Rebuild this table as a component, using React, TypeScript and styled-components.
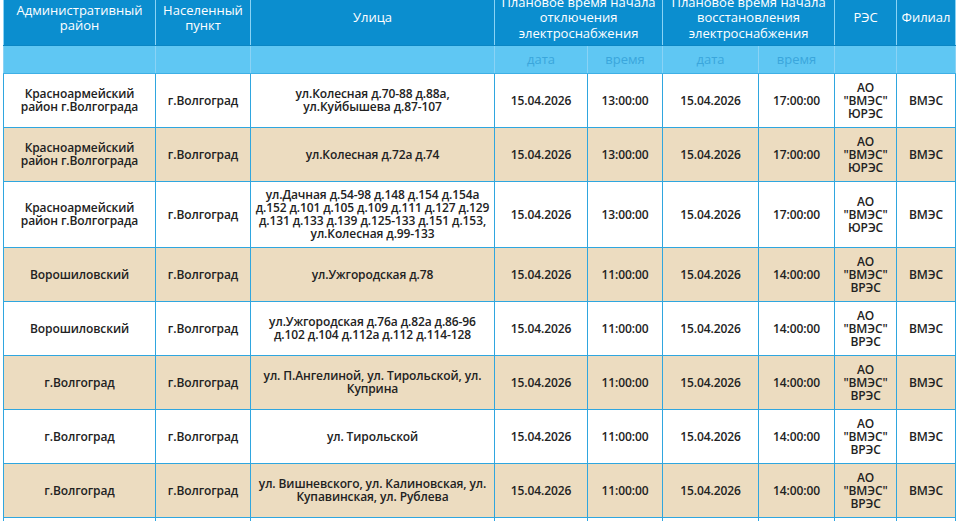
import styled, { createGlobalStyle } from "styled-components";

const GlobalStyle = createGlobalStyle`
  body {
    margin: 0;
    background: #ffffff;
    font-family: "Open Sans", "Liberation Sans", sans-serif;
    overflow: hidden;
  }
`;

const Page = styled.div`
  padding-left: 3px;
  margin-top: -10px;
`;

const Table = styled.table`
  width: 952px;
  table-layout: fixed;
  border-collapse: collapse;
  border: 1px solid #2fa6df;
`;

const HeadCell = styled.th<{ $sub?: boolean }>`
  background: ${(p) => (p.$sub ? "#5fc7f3" : "#0b8ecf")};
  color: ${(p) => (p.$sub ? "#3aa6dc" : "#ffffff")};
  font-weight: 400;
  font-size: 13px;
  line-height: 15.5px;
  padding: 0 4px;
  height: ${(p) => (p.$sub ? "27px" : "54px")};
  text-align: center;
  vertical-align: middle;
  border-left: 1px solid #8ad3f5;
  border-right: 1px solid #8ad3f5;
  border-bottom: 1px solid ${(p) => (p.$sub ? "#3fb0e6" : "#0a86c4")};
`;

const Row = styled.tr<{ $alt?: boolean }>`
  height: 54px;
  background: ${(p) => (p.$alt ? "#ecdcc0" : "#ffffff")};
`;

const Cell = styled.td<{ $nowrap?: boolean }>`
  border: 1px solid #2fa6df;
  padding: 6px 2px 7px;
  font-size: 12px;
  line-height: 13px;
  font-weight: 600;
  color: #222222;
  text-align: center;
  vertical-align: middle;
  white-space: ${(p) => (p.$nowrap ? "nowrap" : "normal")};
  letter-spacing: -0.1px;
`;

type Rec = {
  district: string[];
  street: string[];
  offTime: string;
  onTime: string;
  res: string;
};

const rows: Rec[] = [
  {
    district: ["Красноармейский", "район г.Волгограда"],
    street: ["ул.Колесная д.70-88 д.88а,", "ул.Куйбышева д.87-107"],
    offTime: "13:00:00",
    onTime: "17:00:00",
    res: "ЮРЭС",
  },
  {
    district: ["Красноармейский", "район г.Волгограда"],
    street: ["ул.Колесная д.72а д.74"],
    offTime: "13:00:00",
    onTime: "17:00:00",
    res: "ЮРЭС",
  },
  {
    district: ["Красноармейский", "район г.Волгограда"],
    street: [
      "ул.Дачная д.54-98 д.148 д.154 д.154а",
      "д.152 д.101 д.105 д.109 д.111 д.127 д.129",
      "д.131 д.133 д.139 д.125-133 д.151 д.153,",
      "ул.Колесная д.99-133",
    ],
    offTime: "13:00:00",
    onTime: "17:00:00",
    res: "ЮРЭС",
  },
  {
    district: ["Ворошиловский"],
    street: ["ул.Ужгородская д.78"],
    offTime: "11:00:00",
    onTime: "14:00:00",
    res: "ВРЭС",
  },
  {
    district: ["Ворошиловский"],
    street: ["ул.Ужгородская д.76а д.82а д.86-96", "д.102 д.104 д.112а д.112 д.114-128"],
    offTime: "11:00:00",
    onTime: "14:00:00",
    res: "ВРЭС",
  },
  {
    district: ["г.Волгоград"],
    street: ["ул. П.Ангелиной, ул. Тирольской, ул.", "Куприна"],
    offTime: "11:00:00",
    onTime: "14:00:00",
    res: "ВРЭС",
  },
  {
    district: ["г.Волгоград"],
    street: ["ул. Тирольской"],
    offTime: "11:00:00",
    onTime: "14:00:00",
    res: "ВРЭС",
  },
  {
    district: ["г.Волгоград"],
    street: ["ул. Вишневского, ул. Калиновская, ул.", "Купавинская, ул. Рублева"],
    offTime: "11:00:00",
    onTime: "14:00:00",
    res: "ВРЭС",
  },
  {
    district: ["г.Волгоград"],
    street: ["ул. Ангарская"],
    offTime: "11:00:00",
    onTime: "14:00:00",
    res: "ВРЭС",
  },
];

const Lines = ({ items }: { items: string[] }) => (
  <>
    {items.map((t, i) => (
      <span key={i}>
        {i > 0 && <br />}
        {t}
      </span>
    ))}
  </>
);

const widths = [152, 95, 244, 93, 75, 96, 76, 62, 59];

export default function App() {
  return (
    <>
      <GlobalStyle />
      <Page>
        <Table>
          <colgroup>
            {widths.map((w, i) => (
              <col key={i} style={{ width: w }} />
            ))}
          </colgroup>
          <thead>
            <tr>
              <HeadCell>
                Административный
                <br />
                район
              </HeadCell>
              <HeadCell>
                Населенный
                <br />
                пункт
              </HeadCell>
              <HeadCell>Улица</HeadCell>
              <HeadCell colSpan={2}>
                Плановое время начала
                <br />
                отключения
                <br />
                электроснабжения
              </HeadCell>
              <HeadCell colSpan={2}>
                Плановое время начала
                <br />
                восстановления
                <br />
                электроснабжения
              </HeadCell>
              <HeadCell>РЭС</HeadCell>
              <HeadCell>Филиал</HeadCell>
            </tr>
            <tr>
              <HeadCell $sub />
              <HeadCell $sub />
              <HeadCell $sub />
              <HeadCell $sub>дата</HeadCell>
              <HeadCell $sub>время</HeadCell>
              <HeadCell $sub>дата</HeadCell>
              <HeadCell $sub>время</HeadCell>
              <HeadCell $sub />
              <HeadCell $sub />
            </tr>
          </thead>
          <tbody>
            {rows.map((r, i) => (
              <Row key={i} $alt={i % 2 === 1}>
                <Cell>
                  <Lines items={r.district} />
                </Cell>
                <Cell>г.Волгоград</Cell>
                <Cell $nowrap>
                  <Lines items={r.street} />
                </Cell>
                <Cell>15.04.2026</Cell>
                <Cell>{r.offTime}</Cell>
                <Cell>15.04.2026</Cell>
                <Cell>{r.onTime}</Cell>
                <Cell>
                  <Lines items={["АО", "\"ВМЭС\"", r.res]} />
                </Cell>
                <Cell>ВМЭС</Cell>
              </Row>
            ))}
          </tbody>
        </Table>
      </Page>
    </>
  );
}
